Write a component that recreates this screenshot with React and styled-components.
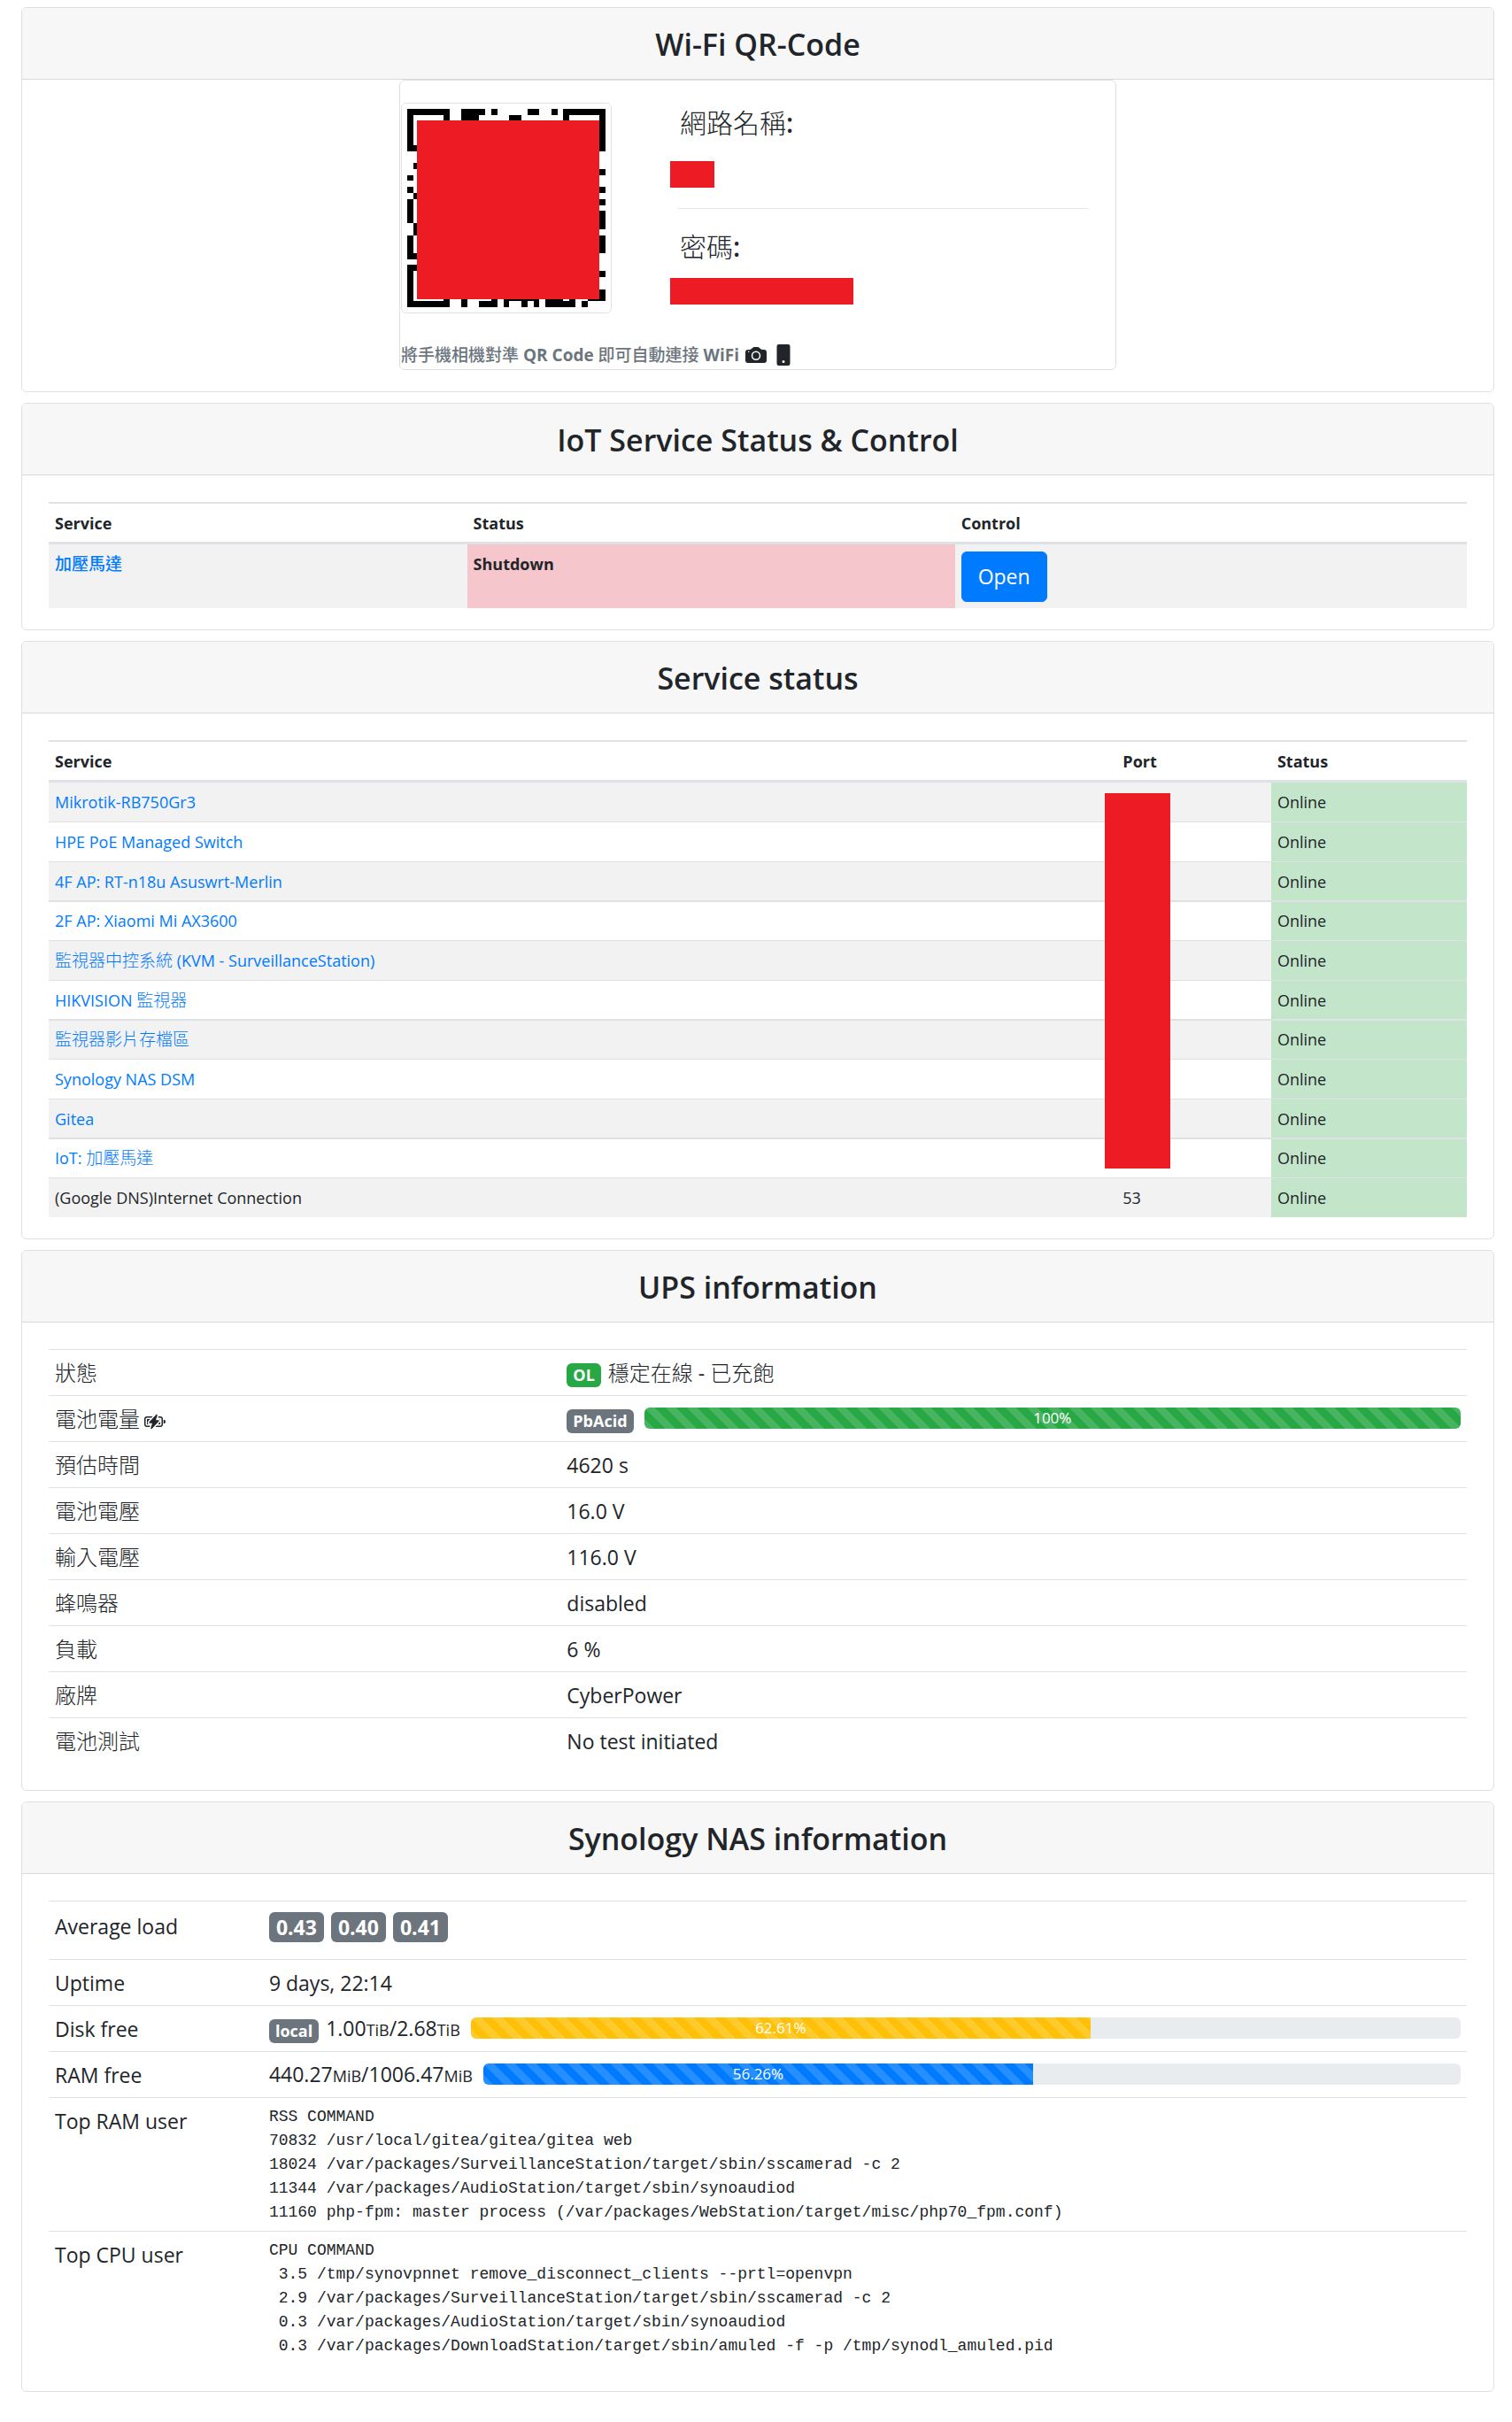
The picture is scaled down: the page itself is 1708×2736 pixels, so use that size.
import React from "react";
import styled, { createGlobalStyle, css } from "styled-components";

const Global = createGlobalStyle`
  *, *::before, *::after { box-sizing: border-box; }
  body {
    margin: 0;
    background: #fff;
    color: #212529;
    font-family: "Open Sans", "Noto Sans CJK TC", sans-serif;
    font-size: 23px;
    line-height: 36px;
  }
`;

const Page = styled.main`
  display: flex;
  flex-direction: column;
  gap: 12px;
  padding: 8px 20px 35px 24px;
`;

const Card = styled.section`
  border: 1px solid #dfdfdf;
  border-radius: 6px;
  overflow: hidden;
`;

const CardHeader = styled.header`
  padding: 19px 30px 17px;
  background: #f7f7f7;
  border-bottom: 1px solid #d8d9da;
  text-align: center;
`;

const CardTitle = styled.h4`
  margin: 0;
  font-size: 34px;
  font-weight: 600;
  line-height: 44px;
`;

const CardBody = styled.div`
  padding: 30px 30px ${(p) => p.$bottom || 24}px;
`;

const WifiBody = styled.div`
  padding-bottom: 24px;
`;

const WifiCard = styled.div`
  display: flex;
  flex-direction: column;
  max-width: 810px;
  margin: 0 auto;
  padding: 25px 1px 2px;
  border: 1px solid #dfdfdf;
  border-radius: 6px;
`;

const WifiColumns = styled.div`
  display: flex;
  gap: 75px;
`;

const QrFrame = styled.div`
  position: relative;
  flex: none;
  width: 238px;
  height: 238px;
  padding: 6px;
  border: 1px solid #dee2e6;
  border-radius: 6px;
`;

const QrSvg = styled.svg`
  display: block;
  width: 224px;
  height: 224px;
`;

const QrMask = styled.div`
  position: absolute;
  left: 17px;
  top: 19px;
  width: 206px;
  height: 202px;
  background: #ed1c24;
`;

const Credentials = styled.div`
  flex: 1;
  display: flex;
  flex-direction: column;
  margin-right: 30px;
`;

const Cjk = styled.span`
  font-family: "Noto Sans CJK TC", sans-serif;
  font-size: ${(p) => p.$size}px;
  font-weight: ${(p) => p.$weight || 300};
  line-height: 1;
`;

const FieldName = styled.h5`
  margin: 0;
  padding: 5px 2px 0;
  font-size: 30px;
  font-weight: 600;
  line-height: 36px;
`;

const Redacted = styled.div`
  width: ${(p) => p.$width}px;
  height: 30px;
  margin: ${(p) => p.$top}px 0 0 -9px;
  background: #ed1c24;
`;

const Divider = styled.hr`
  width: 100%;
  height: 1px;
  margin: 23px 0 20px;
  border: 0;
  background: #e5e5e5;
`;

const Hint = styled.div`
  display: flex;
  align-items: center;
  margin-top: 33px;
  color: #6c757d;
  font-size: 19px;
  font-weight: 700;
  line-height: 28px;
`;

const HintIcon = styled.svg`
  width: 24px;
  height: 24px;
  margin-left: 7px;
  color: #212529;
`;

const BatteryIcon = styled.svg`
  width: 24px;
  height: 24px;
  margin-left: 5px;
  vertical-align: -6px;
`;

const Table = styled.table`
  width: 100%;
  table-layout: fixed;
  border-collapse: separate;
  border-spacing: 0;

  td, th {
    text-align: left;
    vertical-align: top;
    padding: 8px 7px 7px;
    border-top: 1px solid #dee2e6;
  }
`;

const StatusTable = styled(Table)`
  font-size: 18px;
  line-height: 29px;

  thead th {
    padding: 8px 7px 6px;
    border-top-width: 2px;
    border-bottom: 3px solid #dee2e6;
  }
  tbody tr:nth-child(odd) { background: #f2f2f2; }
  tbody tr:first-child td, tbody tr:first-child th { border-top: 0; }
  tbody tr:nth-child(3n) td { padding-bottom: 6px; }
  tbody tr:nth-child(3n + 4) td { border-top-width: 2px; padding-top: 7px; }
`;

const InfoTable = styled(Table)`
  th { font-weight: 400; }
`;

const Col = styled.col`
  width: ${(p) => p.$width};
`;

const tones = { danger: "#f5c6cb", success: "#c3e6cb" };
const StateCell = styled.td`
  background: ${(p) => tones[p.$tone]};
  ${(p) => p.$strong && css`font-weight: 700;`}
`;

const PortCell = styled.td`
  position: relative;
`;

const PortMask = styled.div`
  position: absolute;
  z-index: 1;
  top: 12px;
  left: -13px;
  width: 74px;
  height: 424px;
  background: #ed1c24;
`;

const Link = styled.a`
  color: #007bff;
  text-decoration: none;
`;

const OpenButton = styled.button`
  display: block;
  padding: 9px 18px;
  border: 1px solid #007bff;
  border-radius: 6px;
  background: #007bff;
  color: #fff;
  font: inherit;
  font-size: 23px;
  line-height: 37px;
`;

const badgeTones = { success: "#28a745", secondary: "#6c757d" };
const Badge = styled.span`
  display: inline-block;
  margin-top: ${(p) => (p.$large ? 0 : 4)}px;
  padding: ${(p) => (p.$large ? "5px 8px" : "4px 7px")};
  border-radius: 6px;
  background: ${(p) => badgeTones[p.$tone]};
  color: #fff;
  font-size: ${(p) => (p.$large ? 23 : 18)}px;
  font-weight: 700;
  line-height: ${(p) => (p.$large ? 24 : 19)}px;
  white-space: nowrap;
`;

const Inline = styled.div`
  display: flex;
  align-items: center;
  gap: 8px;
  height: 36px;
`;

const Loads = styled.div`
  display: flex;
  gap: 8px;
  padding: 4px 0 12px;
`;

const LoadName = styled.div`
  padding-top: 2px;
`;

const MeterRow = styled.div`
  display: flex;
  align-items: center;
  gap: 12px;
  height: 36px;
`;

const Unit = styled.small`
  font-size: 18px;
`;

const Track = styled.div`
  flex: 1;
  height: 24px;
  margin-bottom: 2px;
  border-radius: 6px;
  overflow: hidden;
  background: #e9ecef;
`;

const meterTones = { green: "#28a745", yellow: "#ffc107", blue: "#007bff" };
const Fill = styled.div`
  height: 100%;
  background-color: ${(p) => meterTones[p.$tone]};
  background-image: linear-gradient(
    45deg,
    rgba(255, 255, 255, 0.15) 25%,
    transparent 25%,
    transparent 50%,
    rgba(255, 255, 255, 0.15) 50%,
    rgba(255, 255, 255, 0.15) 75%,
    transparent 75%,
    transparent
  );
  background-size: 24px 24px;
  color: #fff;
  font-size: 17px;
  line-height: 24px;
  text-align: center;
`;

const Processes = styled.pre`
  margin: 0;
  font-family: "Liberation Mono", monospace;
  font-size: 18px;
  line-height: 27px;
`;

/* Dark modules as [column, row, width, height] on a 33 x 33 grid. */
const modules = [
  [0, 0, 7, 1], [9, 0, 4, 1], [14, 0, 1, 1], [20, 0, 2, 1], [24, 0, 1, 1], [26, 0, 7, 1],
  [9, 1, 3, 1], [17, 1, 2, 1], [0, 1, 1, 6], [6, 1, 1, 6], [1, 6, 5, 1],
  [26, 1, 1, 6], [32, 1, 1, 6], [27, 6, 5, 1],
  [1, 9, 1, 1], [0, 11, 1, 1], [0, 13, 1, 1], [1, 14, 1, 1], [0, 15, 1, 4],
  [1, 19, 1, 2], [0, 21, 1, 4], [1, 24, 1, 1], [0, 26, 7, 1], [0, 27, 1, 6], [6, 27, 1, 6], [1, 32, 5, 1],
  [32, 10, 1, 1], [32, 13, 1, 1], [32, 15, 1, 1], [32, 17, 1, 3], [32, 21, 1, 3], [32, 27, 1, 1], [32, 30, 1, 2],
  [9, 31, 1, 2], [12, 32, 3, 1], [14, 31, 1, 1], [16, 31, 6, 1], [16, 32, 1, 1], [19, 32, 1, 1], [21, 32, 1, 1],
  [23, 31, 3, 1], [27, 31, 1, 1], [23, 32, 5, 1], [29, 32, 1, 1], [30, 31, 2, 1],
];

function QrCode() {
  return (
    <QrSvg viewBox="0 0 33 33" shapeRendering="crispEdges" role="img" aria-label="Wi-Fi QR-Code">
      {modules.map(([x, y, w, h]) => (
        <rect key={`${x}-${y}`} x={x} y={y} width={w} height={h} />
      ))}
    </QrSvg>
  );
}

/* Sets the Chinese runs of a string in the lighter CJK face. */
function Mixed({ text, size, weight }) {
  return text.split(/([\u4e00-\u9fff]+)/).map((run, i) =>
    i % 2 ? <Cjk key={i} $size={size} $weight={weight}>{run}</Cjk> : run
  );
}

function Panel({ title, bottom, children }) {
  return (
    <Card>
      <CardHeader><CardTitle>{title}</CardTitle></CardHeader>
      <CardBody $bottom={bottom}>{children}</CardBody>
    </Card>
  );
}

function Meter({ value, tone }) {
  return (
    <Track role="progressbar" aria-valuenow={value} aria-valuemin={0} aria-valuemax={100}>
      <Fill $tone={tone} style={{ width: `${value}%` }}>{value}%</Fill>
    </Track>
  );
}

const services = [
  "Mikrotik-RB750Gr3",
  "HPE PoE Managed Switch",
  "4F AP: RT-n18u Asuswrt-Merlin",
  "2F AP: Xiaomi Mi AX3600",
  "監視器中控系統 (KVM - SurveillanceStation)",
  "HIKVISION 監視器",
  "監視器影片存檔區",
  "Synology NAS DSM",
  "Gitea",
  "IoT: 加壓馬達",
];

const upsRows = [
  ["預估時間", "4620 s"],
  ["電池電壓", "16.0 V"],
  ["輸入電壓", "116.0 V"],
  ["蜂鳴器", "disabled"],
  ["負載", "6 %"],
  ["廠牌", "CyberPower"],
  ["電池測試", "No test initiated"],
];

const topRam = `RSS COMMAND
70832 /usr/local/gitea/gitea/gitea web
18024 /var/packages/SurveillanceStation/target/sbin/sscamerad -c 2
11344 /var/packages/AudioStation/target/sbin/synoaudiod
11160 php-fpm: master process (/var/packages/WebStation/target/misc/php70_fpm.conf)`;

const topCpu = `CPU COMMAND
 3.5 /tmp/synovpnnet remove_disconnect_clients --prtl=openvpn
 2.9 /var/packages/SurveillanceStation/target/sbin/sscamerad -c 2
 0.3 /var/packages/AudioStation/target/sbin/synoaudiod
 0.3 /var/packages/DownloadStation/target/sbin/amuled -f -p /tmp/synodl_amuled.pid`;

export default function App() {
  return (
    <Page>
      <Global />
      <Card>
        <CardHeader><CardTitle>Wi-Fi QR-Code</CardTitle></CardHeader>
        <WifiBody>
          <WifiCard>
            <WifiColumns>
              <QrFrame><QrCode /><QrMask /></QrFrame>
              <Credentials>
                <FieldName><Mixed text="網路名稱:" size={30} /></FieldName>
                <Redacted $width={50} $top={25} />
                <Divider />
                <FieldName><Mixed text="密碼:" size={30} /></FieldName>
                <Redacted $width={207} $top={17} />
              </Credentials>
            </WifiColumns>
            <Hint>
              <span><Mixed text="將手機相機對準 QR Code 即可自動連接 WiFi" size={19} weight={500} /></span>
              <HintIcon viewBox="0 0 16 16" fill="currentColor" aria-hidden="true">
                <path d="M10.5 8.5a2.5 2.5 0 1 1-5 0 2.5 2.5 0 0 1 5 0z" />
                <path fillRule="evenodd" d="M2 4a2 2 0 0 0-2 2v6a2 2 0 0 0 2 2h12a2 2 0 0 0 2-2V6a2 2 0 0 0-2-2h-1.172a2 2 0 0 1-1.414-.586l-.828-.828A2 2 0 0 0 9.172 2H6.828a2 2 0 0 0-1.414.586l-.828.828A2 2 0 0 1 3.172 4H2zm.5 2a.5.5 0 1 0 0-1 .5.5 0 0 0 0 1zm9 2.5a3.5 3.5 0 1 1-7 0 3.5 3.5 0 0 1 7 0z" />
              </HintIcon>
              <HintIcon viewBox="0 0 16 16" fill="currentColor" aria-hidden="true">
                <path fillRule="evenodd" d="M3 1.5A1.5 1.5 0 0 1 4.500 0h7A1.5 1.500 0 0 1 13 1.500v13a1.500 1.500 0 0 1-1.500 1.500h-7A1.500 1.500 0 0 1 3 14.500zM9 13a1 1 0 1 1-2 0 1 1 0 0 1 2 0z" />
              </HintIcon>
            </Hint>
          </WifiCard>
        </WifiBody>
      </Card>

      <Panel title="IoT Service Status & Control">
        <StatusTable>
          <colgroup><Col $width="29.5%" /><Col $width="34.4%" /><Col /></colgroup>
          <thead><tr><th>Service</th><th>Status</th><th>Control</th></tr></thead>
          <tbody>
            <tr>
              <th><Link href="#pump"><Mixed text="加壓馬達" size={19} weight={500} /></Link></th>
              <StateCell $tone="danger" $strong>Shutdown</StateCell>
              <td><OpenButton type="button">Open</OpenButton></td>
            </tr>
          </tbody>
        </StatusTable>
      </Panel>

      <Panel title="Service status">
        <StatusTable>
          <colgroup><Col /><Col $width="10.9%" /><Col $width="13.8%" /></colgroup>
          <thead><tr><th>Service</th><th>Port</th><th>Status</th></tr></thead>
          <tbody>
            {services.map((name, i) => (
              <tr key={name}>
                <td><Link href="#service"><Mixed text={name} size={19} /></Link></td>
                <PortCell>{i === 0 && <PortMask />}</PortCell>
                <StateCell $tone="success">Online</StateCell>
              </tr>
            ))}
            <tr>
              <td>(Google DNS)Internet Connection</td>
              <PortCell>53</PortCell>
              <StateCell $tone="success">Online</StateCell>
            </tr>
          </tbody>
        </StatusTable>
      </Panel>

      <Panel title="UPS information" bottom={30}>
        <InfoTable>
          <colgroup><Col $width="36.1%" /><Col /></colgroup>
          <tbody>
            <tr>
              <th scope="row"><Mixed text="狀態" size={24} /></th>
              <td>
                <Inline>
                  <Badge $tone="success">OL</Badge>
                  <span><Mixed text="穩定在線 - 已充飽" size={24} /></span>
                </Inline>
              </td>
            </tr>
            <tr>
              <th scope="row">
                <Mixed text="電池電量" size={24} />
                <BatteryIcon viewBox="0 0 16 16" fill="currentColor" aria-hidden="true">
                  <path d="M9.585 2.568a.5.5 0 0 1 .226.58L8.677 6.832h1.99a.5.5 0 0 1 .364.843l-5.334 5.667a.5.5 0 0 1-.842-.49L5.99 9.167H4a.5.5 0 0 1-.364-.843l5.333-5.667a.5.5 0 0 1 .616-.09z" />
                  <path d="M2 4h4.332l-.94 1H2a1 1 0 0 0-1 1v4a1 1 0 0 0 1 1h2.38l-.308 1H2a2 2 0 0 1-2-2V6a2 2 0 0 1 2-2z" />
                  <path d="M2 6h2.45L2.908 7.639A1.5 1.5 0 0 0 3.313 10H2V6zm8.595-2-.308 1H12a1 1 0 0 1 1 1v4a1 1 0 0 1-1 1H9.276l-.942 1H12a2 2 0 0 0 2-2V6a2 2 0 0 0-2-2h-1.405z" />
                  <path d="M12 10h-1.783l1.542-1.639c.097-.103.178-.218.241-.34V10zm0-3.354V6h-.646a1.5 1.5 0 0 1 .646.646zM16 8a1.5 1.5 0 0 1-1.5 1.5v-3A1.5 1.5 0 0 1 16 8z" />
                </BatteryIcon>
              </th>
              <td><MeterRow><Badge $tone="secondary">PbAcid</Badge><Meter value={100} tone="green" /></MeterRow></td>
            </tr>
            {upsRows.map(([name, value]) => (
              <tr key={name}><th scope="row"><Mixed text={name} size={24} /></th><td>{value}</td></tr>
            ))}
          </tbody>
        </InfoTable>
      </Panel>

      <Panel title="Synology NAS information" bottom={30}>
        <InfoTable>
          <colgroup><Col $width="15.1%" /><Col /></colgroup>
          <tbody>
            <tr>
              <th scope="row"><LoadName>Average load</LoadName></th>
              <td>
                <Loads>
                  <Badge $large $tone="secondary">0.43</Badge>
                  <Badge $large $tone="secondary">0.40</Badge>
                  <Badge $large $tone="secondary">0.41</Badge>
                </Loads>
              </td>
            </tr>
            <tr><th scope="row">Uptime</th><td>9 days, 22:14</td></tr>
            <tr>
              <th scope="row">Disk free</th>
              <td>
                <MeterRow>
                  <Inline>
                    <Badge $tone="secondary">local</Badge>
                    <span>1.00<Unit>TiB</Unit>/2.68<Unit>TiB</Unit></span>
                  </Inline>
                  <Meter value={62.61} tone="yellow" />
                </MeterRow>
              </td>
            </tr>
            <tr>
              <th scope="row">RAM free</th>
              <td>
                <MeterRow>
                  <span>440.27<Unit>MiB</Unit>/1006.47<Unit>MiB</Unit></span>
                  <Meter value={56.26} tone="blue" />
                </MeterRow>
              </td>
            </tr>
            <tr><th scope="row">Top RAM user</th><td><Processes>{topRam}</Processes></td></tr>
            <tr><th scope="row">Top CPU user</th><td><Processes>{topCpu}</Processes></td></tr>
          </tbody>
        </InfoTable>
      </Panel>
    </Page>
  );
}
